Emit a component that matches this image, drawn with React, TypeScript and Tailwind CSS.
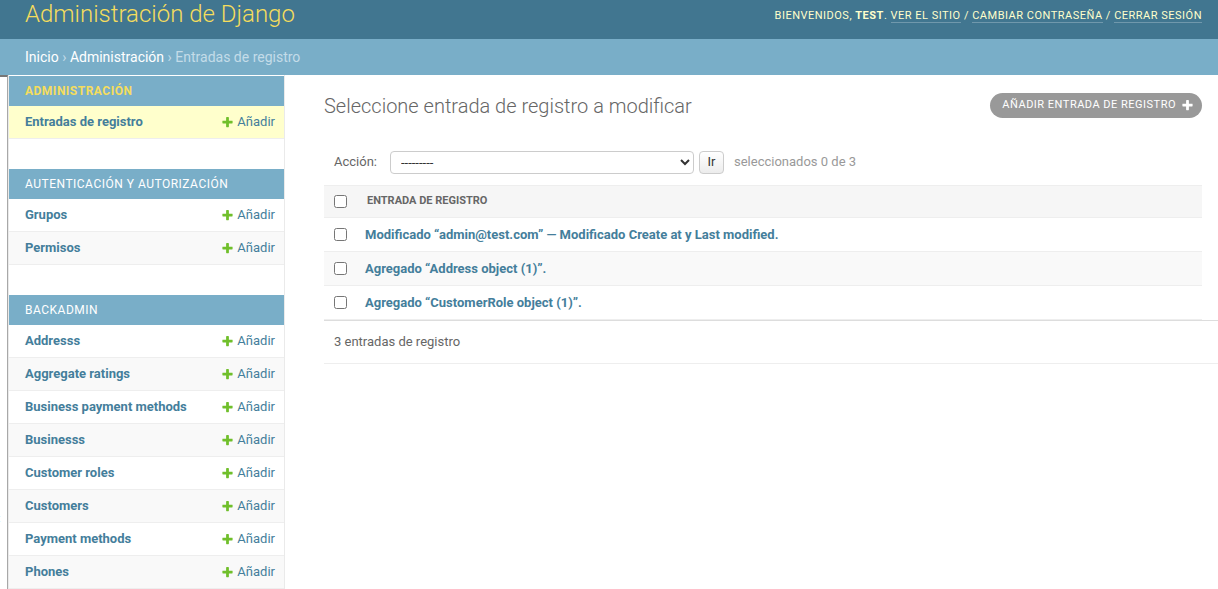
import React from 'react';

const PlusIcon: React.FC<{ className?: string }> = ({ className }) => (
  <svg viewBox="0 0 1792 1792" className={className} fill="currentColor" aria-hidden="true">
    <path d="M1600 736v192q0 40-28 68t-68 28h-416v416q0 40-28 68t-68 28h-192q-40 0-68-28t-28-68v-416h-416q-40 0-68-28t-28-68v-192q0-40 28-68t68-28h416v-416q0-40 28-68t68-28h192q40 0 68 28t28 68v416h416q40 0 68 28t28 68z" />
  </svg>
);

interface Module {
  name: string;
  current?: boolean;
  models: { name: string; current?: boolean }[];
}

const modules: Module[] = [
  { name: 'Administración', current: true, models: [{ name: 'Entradas de registro', current: true }] },
  { name: 'Autenticación y autorización', models: [{ name: 'Grupos' }, { name: 'Permisos' }] },
  {
    name: 'Backadmin',
    models: [
      { name: 'Addresss' },
      { name: 'Aggregate ratings' },
      { name: 'Business payment methods' },
      { name: 'Businesss' },
      { name: 'Customer roles' },
      { name: 'Customers' },
      { name: 'Payment methods' },
      { name: 'Phones' },
    ],
  },
];

const entries = [
  'Modificado “admin@test.com” — Modificado Create at y Last modified.',
  'Agregado “Address object (1)”.',
  'Agregado “CustomerRole object (1)”.',
];

const Sidebar: React.FC = () => (
  <nav className="w-[277px] shrink-0 pt-px border-x border-[#eaeaea]">
    {modules.map((mod) => (
      <div key={mod.name} className="mb-[30px]">
        <div
          className={`h-[30px] flex items-center px-4 bg-[#79aec8] text-[12px] uppercase tracking-[0.5px] ${
            mod.current ? 'font-bold text-[#f5dd5d]' : 'text-white'
          }`}
        >
          {mod.name}
        </div>
        {mod.models.map((m, i) => (
          <div
            key={m.name}
            className={`h-[33px] flex items-center justify-between pl-4 pr-[9px] border-b border-[#eee] text-[13px] text-[#447e9b] ${
              m.current ? 'bg-[#ffffcc]' : i % 2 === 1 ? 'bg-[#f9f9f9]' : 'bg-white'
            }`}
          >
            <span className="font-bold">{m.name}</span>
            <span className="flex items-center gap-[3px]">
              <PlusIcon className="w-[13px] h-[13px] text-[#70bf2b]" />
              Añadir
            </span>
          </div>
        ))}
      </div>
    ))}
  </nav>
);

const App: React.FC = () => {
  return (
    <div className="min-h-screen bg-white text-[#333] font-['Roboto','Liberation_Sans',sans-serif] overflow-hidden">
      <header className="h-[39px] bg-[#417690] flex items-start justify-between pl-[25px] pr-4">
        <h1 className="text-[24px] leading-[28px] font-light text-[#f5dd5d]">Administración de Django</h1>
        <div className="pt-[9px] text-[11px] leading-[14px] uppercase tracking-[0.5px] text-[#ffffcc]">
          Bienvenidos, <strong className="font-bold">test</strong>.{' '}
          <a className="border-b border-white/25">Ver el sitio</a> /{' '}
          <a className="border-b border-white/25">Cambiar contraseña</a> /{' '}
          <a className="border-b border-white/25">Cerrar sesión</a>
        </div>
      </header>

      <div className="h-[36px] bg-[#79aec8] flex items-center pl-[25px] text-[14px] text-[#c4dce8]">
        <a className="text-white">Inicio</a>
        <span className="mx-[3.5px]">›</span>
        <a className="text-white">Administración</a>
        <span className="mx-[3.5px]">›</span>
        <span>Entradas de registro</span>
      </div>

      <div className="flex">
        <div className="w-[8px] shrink-0 border-r border-[#a8a8a8] border-t-2 border-t-[#777] overflow-hidden">
          <div className="mt-[434px] -ml-[6px] text-[14px] text-[#447e9b] leading-none">«</div>
        </div>
        <Sidebar />

        <main className="flex-1 min-w-0 pl-[39px] pr-4 pt-[17px]">
          <div className="flex items-start justify-between">
            <h1 className="mt-[2px] text-[20px] leading-[24px] font-light text-[#666]">
              Seleccione entrada de registro a modificar
            </h1>
            <a className="mt-px h-[25px] flex items-center gap-[5px] rounded-full bg-[#999] pl-[12px] pr-[8px] text-[11px] uppercase tracking-[0.5px] text-white">
              Añadir entrada de registro
              <PlusIcon className="w-[13px] h-[13px] text-white" />
            </a>
          </div>

          <div className="mt-[23px] h-[44px] flex items-center px-[10px] pb-[2px] text-[13px]">
            <span className="text-[#666] mr-[13px]">Acción:</span>
            <select className="w-[304px] h-[23px] border border-[#ccc] rounded-[4px] bg-white text-[13px] text-[#333] pl-[6px] appearance-auto">
              <option>---------</option>
            </select>
            <button className="ml-[5px] h-[23px] w-[25px] border border-[#ccc] rounded-[4px] bg-linear-to-b from-white to-[#ececec] text-[13px] text-[#333]">
              Ir
            </button>
            <span className="ml-[10px] text-[#999]">seleccionados 0 de 3</span>
          </div>

          <div>
            <div className="h-[33px] flex items-center bg-[#f6f6f6] border-y border-[#eee] pl-[10px] text-[11px] font-bold uppercase text-[#666]">
              <input type="checkbox" className="w-[13px] h-[13px] m-0" />
              <span className="ml-[20px]">Entrada de registro</span>
            </div>
            {entries.map((e, i) => (
              <div
                key={e}
                className={`h-[34px] flex items-center border-b border-[#eee] pl-[10px] text-[13px] font-bold text-[#447e9b] ${
                  i % 2 === 1 ? 'bg-[#f9f9f9]' : 'bg-white'
                }`}
              >
                <input type="checkbox" className="w-[13px] h-[13px] m-0" />
                <a className="ml-[18px]">{e}</a>
              </div>
            ))}
          </div>

          <div className="-mr-4 h-[44px] flex items-center px-[10px] border-t border-[#ddd] border-b border-b-[#eee] text-[13px] text-[#666]">
            3 entradas de registro
          </div>
        </main>
      </div>
    </div>
  );
};

export default App;
